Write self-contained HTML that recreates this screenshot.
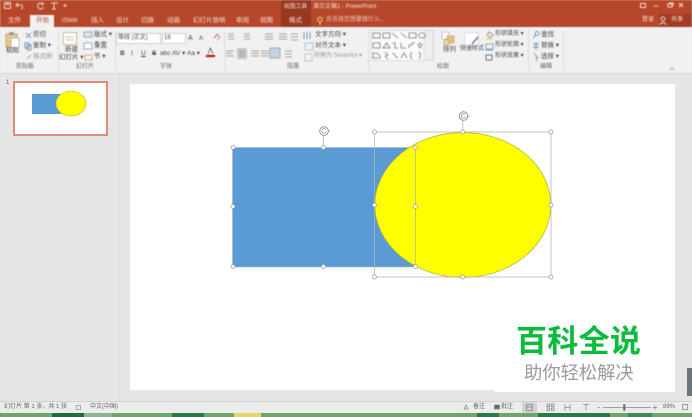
<!DOCTYPE html>
<html lang="zh"><head><meta charset="utf-8"><title>PowerPoint</title>
<style>
html,body{margin:0;padding:0}
body{width:692px;height:417px;overflow:hidden;position:relative;background:#e6e6e6;font-family:"Liberation Sans","Noto Sans CJK SC",sans-serif}
div,span{position:absolute}
.t{white-space:nowrap;font-size:6.5px;line-height:9px;color:#444}
.w{color:#f6dcd3}
.g{color:#999}
.l{color:#666;font-size:6px}
.sep{width:1px;top:30px;height:41px;background:#dcdcdc}
.box{background:#fff;border:1px solid #d0d0d0;box-sizing:border-box}
#ui{position:absolute;left:0;top:0;width:692px;height:74px;filter:blur(.4px)}
</style></head><body>

<div id="ui">
<div style="left:0;top:0;width:692px;height:27px;background:#b7472a"></div>
<div style="left:281px;top:0;width:30px;height:27px;background:#99381f"></div>
<div style="left:659px;top:14px;width:33px;height:13px;background:#a03d24"></div>
<div style="left:0;top:27px;width:692px;height:46px;background:#f1f1f1"></div>
<div style="left:0;top:73px;width:692px;height:1px;background:#d4d4d4"></div>
<div style="left:30px;top:15px;width:24px;height:13px;background:#f1f1f1"></div>

<svg style="position:absolute;left:0;top:0" width="692" height="74" fill="none" stroke="#f3d5ca" stroke-width="1">
<rect x="4.5" y="2.5" width="6" height="6"/><path d="M6.5 2.5v2h2v-2"/>
<path d="M18 3l-2 2 2 2M16 5h4a2 2 0 0 1 1 4"/>
<path d="M43 4a3 3 0 1 0 .5 3M43 2.5v2h-2"/>
<path d="M51 3h7M54 3v6M52 9h4"/>
<circle cx="65" cy="5.5" r=".8"/>
<rect x="640.5" y="3.5" width="5" height="4"/><path d="M654 6h4M668 4h4v3h-4zM669 3h4v3"/>
<path d="M679 3l4 4M683 3l-4 4" stroke-width="1.2"/>
<circle cx="663" cy="19" r="2"/><path d="M660 25c0-3 6-3 6 0"/>
<circle cx="320" cy="19.5" r="2.2" stroke="#f5d97a"/><path d="M320 22v3" stroke="#f5d97a"/>
</svg>

<span class="t w" style="left:8px;top:16px">文件</span>
<span class="t" style="left:36px;top:16px;color:#b7472a">开始</span>
<span class="t w" style="left:62px;top:16px">iSlide</span>
<span class="t w" style="left:91px;top:16px">插入</span>
<span class="t w" style="left:116px;top:16px">设计</span>
<span class="t w" style="left:141px;top:16px">切换</span>
<span class="t w" style="left:167px;top:16px">动画</span>
<span class="t w" style="left:193px;top:16px">幻灯片放映</span>
<span class="t w" style="left:236px;top:16px">审阅</span>
<span class="t w" style="left:260px;top:16px">视图</span>
<span class="t w" style="left:289px;top:16px">格式</span>
<span class="t w" style="left:326px;top:16px;font-size:6px;opacity:.85">告诉我您想要做什么...</span>
<span class="t w" style="left:284px;top:3px;font-size:5.8px">绘图工具</span>
<span class="t w" style="left:313px;top:3px;font-size:6px">演示文稿1 - PowerPoint</span>
<span class="t w" style="left:642px;top:16px;font-size:6px">登录</span>
<span class="t w" style="left:671px;top:16px;font-size:6px">共享</span>

<svg style="position:absolute;left:0;top:0" width="692" height="74" fill="none" stroke="#8a8a8a" stroke-width=".8">
<rect x="6" y="34" width="11" height="13" fill="#e8c98a" stroke="#b69a62"/>
<rect x="11" y="38" width="8" height="10" fill="#fff" stroke="#aaa"/>
<rect x="9" y="32" width="5" height="3" fill="#999" stroke="none"/>
<path d="M26 33l5 5M31 33l-5 5" stroke="#5a7fa8"/>
<rect x="25" y="43" width="4" height="5" stroke="#5a7fa8"/><rect x="27" y="45" width="4" height="5" stroke="#5a7fa8"/>
<path d="M27 59l4-4" stroke="#bbb" stroke-width="1.4"/>
<rect x="63.500" y="32.500" width="13" height="12" fill="#fff" stroke="#c9a86a"/><path d="M66 37h8M66 40h8" stroke="#aaa"/>
<rect x="84" y="32" width="8" height="5" fill="#dfe5ec" stroke="#8a9bb0"/>
<rect x="84" y="43" width="8" height="6" fill="#fff" stroke="#8a9bb0"/>
<rect x="85" y="55" width="7" height="5" stroke="#c9a86a"/>
<path d="M217 34l3 3-3 3" stroke="#c77a8a"/><path d="M214 38l4-4" stroke="#c77a8a" stroke-width="1.4"/>
<rect x="206" y="55" width="9" height="2" fill="#c00000" stroke="none"/>
<path d="M208 54l2.500-6 2.500 6" stroke="#555"/>
<path d="M228 34h6M228 36.500h6M228 39h6M244 34h6M244 36.500h6M244 39h6M265 34h8M265 36.500h8M265 39h8M279 34h8M279 36.500h8M279 39h8M291 34h7M291 37h7M291 40h7"/>
<path d="M226 51h8M226 53.500h6M226 56h8M251 51h8M251 53.500h8M251 56h8M261 51h8M261 53.500h8M261 56h8M272 51h8M272 53.500h8M272 56h8M285 51h7M285 54h7M285 57h7"/>
<rect x="237" y="48" width="10" height="11" fill="#c8c8c8" stroke="none"/>
<path d="M239 51h6M239 53.500h6M239 56h6"/>
<rect x="270" y="48" width="10" height="10" fill="#c8d4e4" stroke="#8a9bb0"/>
<path d="M307 32v7M310 32v7M304 32v7" stroke="#5a7fa8"/>
<rect x="305" y="43" width="8" height="7" stroke="#5a7fa8" stroke-dasharray="1 1"/>
<rect x="305" y="54" width="7" height="7" stroke="#bbb"/>
<rect x="371.500" y="30.500" width="62" height="30" fill="#fafafa" stroke="#d6d6d6"/>
<rect x="424" y="31" width="9" height="29" fill="#eee" stroke="#d8d8d8"/>
<g stroke="#777">
<rect x="373" y="33" width="7" height="5"/><rect x="383" y="33" width="7" height="5"/>
<path d="M392 33l6 5M401 33l6 5"/><rect x="409" y="33" width="7" height="5"/><ellipse cx="422" cy="35.500" rx="3.500" ry="2.500"/>
<rect x="373" y="43" width="7" height="5"/><path d="M383 48l3.500-5 3.500 5zM392 43h3v5h3M401 43v5h5M409 48v-3h3v-2h3M418 45l2-2 2 2-2 3z"/>
<path d="M373 58v-5h4l3 3v2zM385 52l3 3-3 1 3 3M392 53c3 0 3 5 6 5M401 58l3-5 3 5M412 52c-2 2-2 5 0 7M419 52c2 2 2 5 0 7"/>
</g>
<rect x="442" y="32" width="7" height="7" fill="#fff" stroke="#bbb"/><rect x="447" y="36" width="7" height="7" fill="#e2c27a" stroke="#c9a86a"/><rect x="444" y="40" width="5" height="5" fill="#e8d9b0" stroke="#c9a86a"/>
<rect x="464.500" y="32.500" width="14" height="14" rx="3" fill="#fff" stroke="#ccc"/><path d="M478 37l-6 7" stroke="#5f7ea8" stroke-width="1.5"/>
<path d="M489 32l4 3-3 3-3-3z" stroke="#888"/><path d="M486 39h7" stroke="#e8e34a" stroke-width="1.5"/>
<rect x="486" y="44" width="7" height="5" stroke="#6f93bd"/><path d="M486 50h7" stroke="#4a80c0"/>
<rect x="486" y="55" width="6" height="5" stroke="#555"/>
<circle cx="537" cy="33.500" r="2" stroke="#4a80c0"/><path d="M535.500 35l-2 3" stroke="#4a80c0"/>
<path d="M533 44h6M533 47h6M536 42v8" stroke="#5a7fa8"/>
<path d="M534 53l4 5-2 0 1 3" stroke="#888"/>
<path d="M670 70l2-2 2 2" stroke="#888"/>
</svg>

<div class="sep" style="left:58px"></div><div class="sep" style="left:115px"></div><div class="sep" style="left:224px"></div>
<div class="sep" style="left:368px"></div><div class="sep" style="left:528px"></div><div class="sep" style="left:563px"></div>

<span class="t" style="left:6px;top:46px">粘贴</span>
<span class="t" style="left:33px;top:30px">剪切</span>
<span class="t" style="left:33px;top:41px">复制 ▾</span>
<span class="t g" style="left:33px;top:52px">格式刷</span>
<span class="t" style="left:65px;top:45px">新建</span>
<span class="t" style="left:59px;top:53px">幻灯片 ▾</span>
<span class="t" style="left:94px;top:30px">版式 ▾</span>
<span class="t" style="left:94px;top:41px">重置</span>
<span class="t" style="left:94px;top:52px">节 ▾</span>
<span class="t l" style="left:16px;top:63px">剪贴板</span>
<span class="t l" style="left:76px;top:63px">幻灯片</span>
<span class="t l" style="left:160px;top:63px">字体</span>
<span class="t l" style="left:287px;top:63px">段落</span>
<span class="t l" style="left:437px;top:63px">绘图</span>
<span class="t l" style="left:540px;top:63px">编辑</span>

<div class="box" style="left:116px;top:33px;width:45px;height:11px"></div>
<span class="t" style="left:118px;top:34px;font-size:6px">等线 (正文)</span>
<div class="box" style="left:162px;top:33px;width:24px;height:11px"></div>
<span class="t" style="left:164px;top:34px;font-size:6px">18</span>
<span class="t" style="left:188px;top:34px;font-size:7px">A</span>
<span class="t" style="left:199px;top:35px;font-size:6px">A</span>
<span class="t" style="left:120px;top:49px;font-weight:bold">B</span>
<span class="t" style="left:131px;top:49px;font-style:italic">I</span>
<span class="t" style="left:141px;top:49px;text-decoration:underline">U</span>
<span class="t" style="left:152px;top:49px;font-weight:bold;text-decoration:line-through">S</span>
<span class="t" style="left:160px;top:49px">abc</span>
<span class="t" style="left:172px;top:49px">AV ▾</span>
<span class="t" style="left:187px;top:49px">Aa ▾</span>

<span class="t" style="left:315px;top:30px">文字方向 ▾</span>
<span class="t" style="left:315px;top:41px">对齐文本 ▾</span>
<span class="t g" style="left:314px;top:52px;font-size:6px">转换为 SmartArt ▾</span>
<span class="t" style="left:443px;top:45px">排列</span>
<span class="t" style="left:460px;top:45px;font-size:6px">快速样式</span>
<span class="t" style="left:495px;top:30px;font-size:6px">形状填充 ▾</span>
<span class="t" style="left:495px;top:41px;font-size:6px">形状轮廓 ▾</span>
<span class="t" style="left:495px;top:52px;font-size:6px">形状效果 ▾</span>
<span class="t" style="left:541px;top:30px">查找</span>
<span class="t" style="left:541px;top:41px">替换 ▾</span>
<span class="t" style="left:541px;top:52px">选择 ▾</span>
</div>

<div style="left:119px;top:74px;width:1px;height:327px;background:#dcdcdc"></div>
<div style="left:0;top:401px;width:692px;height:1px;background:#d0d0d0"></div>

<span class="t" style="left:6px;top:79px;color:#b7472a;font-size:6px">1</span>
<div style="left:13px;top:81px;width:95px;height:55px;box-sizing:border-box;border:2px solid #dc8c78;background:#fff"></div>
<svg style="position:absolute;left:0;top:0" width="120" height="150">
<rect x="32" y="94" width="29" height="20" fill="#5b9bd5"/>
<ellipse cx="71" cy="103.500" rx="15" ry="12.500" fill="#ffff00" stroke="#b9b92a" stroke-width=".6"/>
</svg>

<div style="left:130px;top:84px;width:545px;height:306px;background:#fff"></div>
<svg style="position:absolute;left:0;top:0" width="692" height="417" fill="none">
<rect x="232.500" y="147.500" width="183" height="119.500" fill="#5b9bd5" stroke="#a8b4c0" stroke-width=".5"/>
<ellipse cx="462.800" cy="205" rx="88" ry="72.500" fill="#ffff00" stroke="#a8ad3a" stroke-width=".7"/>
<g stroke="#b4b4b4" stroke-width=".8">
<path d="M415.500 147.500V267"/>
<rect x="374.500" y="132" width="176.500" height="145"/>
<path d="M323.500 147V135M462.800 132V120"/>
</g>
<g fill="#fff" stroke="#949494" stroke-width=".7">
<circle cx="233" cy="147.500" r="2"/><circle cx="323.500" cy="147.500" r="2"/><circle cx="415.500" cy="147.500" r="2"/>
<circle cx="233" cy="206.500" r="2"/><circle cx="415.500" cy="206.500" r="2"/>
<circle cx="233" cy="266.500" r="2"/><circle cx="323.500" cy="266.500" r="2"/><circle cx="415.500" cy="266.500" r="2"/>
<circle cx="374.500" cy="132" r="2"/><circle cx="462.800" cy="132" r="2"/><circle cx="551" cy="132" r="2"/>
<circle cx="374.500" cy="205" r="2"/><circle cx="551" cy="205" r="2"/>
<circle cx="374.500" cy="277" r="2"/><circle cx="462.800" cy="277" r="2"/><circle cx="551" cy="277" r="2"/>
</g>
<g stroke="#8a8a8a" stroke-width=".9" fill="#fff">
<circle cx="324" cy="131" r="4.300"/><circle cx="463.500" cy="116" r="4.300"/>
</g>
<g stroke="#8a8a8a" stroke-width=".7">
<path d="M326 129.500a2.300 2.300 0 1 0 .3 2M328 131h2"/><path d="M465.500 114.500a2.300 2.300 0 1 0 .3 2M467.500 116h2"/>
</g>
</svg>

<div style="left:494px;top:320px;width:181px;height:72px;background:#fff"></div>
<span class="t" style="left:516px;top:323px;font-size:31px;line-height:38px;font-weight:bold;color:#0cba3e;letter-spacing:.3px">百科全说</span>
<span class="t" style="left:524px;top:361px;font-size:18.300px;line-height:23px;color:#9a9a9a">助你轻松解决</span>
<div style="left:687px;top:368px;width:5px;height:28px;background:#6b7478"></div>

<div style="left:0;top:402px;width:692px;height:11px;background:#ececec"></div>
<span class="t" style="left:4px;top:403px;font-size:6px;color:#666">幻灯片 第 1 张，共 1 张</span>
<span class="t" style="left:90px;top:403px;font-size:6px;color:#666">中文(中国)</span>
<div style="left:76px;top:405px;width:5px;height:5px;border:1px solid #aaa;box-sizing:border-box"></div>
<span class="t" style="left:473px;top:403px;font-size:6px;color:#666">备注</span>
<span class="t" style="left:501px;top:403px;font-size:6px;color:#666">批注</span>
<div style="left:522px;top:402px;width:15px;height:11px;background:#d2d2d2"></div>
<svg style="position:absolute;left:0;top:400px" width="692" height="14" fill="none" stroke="#888" stroke-width=".8">
<path d="M464 9l2-4 2 4z"/><rect x="494.500" y="5" width="5" height="4" fill="#666"/>
<rect x="526.500" y="4.500" width="6" height="6"/><path d="M526.500 7h6"/>
<rect x="547" y="4" width="2.500" height="2.500"/><rect x="551.500" y="4" width="2.500" height="2.500"/><rect x="547" y="8" width="2.500" height="2.500"/><rect x="551.500" y="8" width="2.500" height="2.500"/>
<path d="M565 4.500v6M570 4.500v6M565 7.500h5"/>
<path d="M583 4.500h6M586 5v5"/>
<path d="M598 7.500h2M603 7.500h48M653 7.500h4M655 5.500v4"/>
<rect x="623.500" y="4.500" width="1.500" height="6" fill="#555"/>
<rect x="682.500" y="4.500" width="5" height="5"/>
</svg>
<span class="t" style="left:663px;top:403px;font-size:6px;color:#666">89%</span>

<div style="left:0;top:413px;width:692px;height:4px;background:#6fa46a"></div>
<div style="left:52px;top:413px;width:32px;height:4px;background:#1f6a3e"></div>
<div style="left:84px;top:413px;width:28px;height:4px;background:#8db58f"></div>
<div style="left:172px;top:413px;width:32px;height:4px;background:#2a7a45"></div>
<div style="left:234px;top:413px;width:27px;height:4px;background:#e4d66a"></div>
<div style="left:477px;top:413px;width:22px;height:4px;background:#2a7a45"></div>
<div style="left:538px;top:413px;width:72px;height:4px;background:#2a7a45"></div>
<div style="left:628px;top:413px;width:24px;height:4px;background:#3f8a55"></div>
</body></html>
